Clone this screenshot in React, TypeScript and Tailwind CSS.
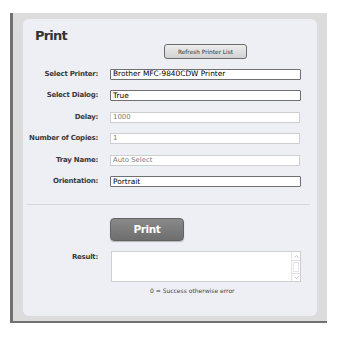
import React from "react";

const font = "font-['DejaVu_Sans',sans-serif]";

const Label = ({ text }: { text: string }) => (
  <div className="w-[75px] text-right text-[7px] leading-[7px] font-bold tracking-[-0.25px] text-[#3a3a3a] whitespace-nowrap">
    {text}
  </div>
);

const SelectBox = ({ value }: { value: string }) => (
  <div className="ml-[12px] w-[191px] h-[11px] bg-white border border-[#707070] rounded-[1px] flex items-end pl-[2px] pb-[0.5px] text-[7.4px] leading-[8px] text-black whitespace-nowrap">
    {value}
  </div>
);

const TextBox = ({ value }: { value: string }) => (
  <div className="ml-[12px] w-[190px] h-[11px] bg-white border border-[#cfcfcf] flex items-center pl-[2px] text-[6.9px] leading-[7px] text-[#7a7a7a] whitespace-nowrap">
    {value}
  </div>
);

const rows: { label: string; value: string; kind: "select" | "text" }[] = [
  { label: "Select Printer:", value: "Brother MFC-9840CDW Printer", kind: "select" },
  { label: "Select Dialog:", value: "True", kind: "select" },
  { label: "Delay:", value: "1000", kind: "text" },
  { label: "Number of Copies:", value: "1", kind: "text" },
  { label: "Tray Name:", value: "Auto Select", kind: "text" },
  { label: "Orientation:", value: "Portrait", kind: "select" },
];

export default function App() {
  return (
    <div className={`${font} w-[340px] h-[340px] bg-white pt-[13px] pl-[10px]`}>
      <div className="w-[317px] h-[310px] bg-[#dcdcdc] border-l-[3px] border-b-[2px] border-[#717171] px-[10px] pt-[6px] pb-[5px]">
        <div className="h-full bg-[#eeeff5] rounded-[6px] pt-[9.5px]">
          <div className="pl-[12px] text-[13px] leading-[13px] font-bold tracking-[-0.8px] text-[#333]">Print</div>

          <div className="ml-[141px] mt-[2.5px] w-[83px] h-[15px] rounded-[3px] border border-[#6c6c6c] bg-gradient-to-b from-[#ececec] to-[#d2d2d2] flex items-center justify-center text-[5.8px] leading-[6px] text-[#333] whitespace-nowrap">
            Refresh Printer List
          </div>

          <div className="mt-[9.5px] flex flex-col gap-[10.6px]">
            {rows.map((r) => (
              <div key={r.label} className="flex items-center">
                <Label text={r.label} />
                {r.kind === "select" ? <SelectBox value={r.value} /> : <TextBox value={r.value} />}
              </div>
            ))}
          </div>

          <div className="ml-[4px] mt-[17px] w-[283px] h-px bg-[#d6d7dc]" />

          <div className="ml-[87px] mt-[13px] w-[74px] h-[23px] rounded-[4px] border border-[#626262] bg-gradient-to-b from-[#8a8a8a] to-[#6e6e6e] shadow-[0_1px_1px_rgba(0,0,0,0.25)] flex items-center justify-center text-[10.5px] leading-[11px] font-bold tracking-[-0.4px] text-white">
            Print
          </div>

          <div className="mt-[10px] flex items-start">
            <div className="pt-[3px]">
              <Label text="Result:" />
            </div>
            <div className="ml-[13px] w-[190px] h-[31px] bg-white border border-[#cfcfcf] flex justify-end">
              <div className="w-[9px] h-full border-l border-[#e2e2e2] flex flex-col">
                <div className="h-[9px] border-b border-[#e2e2e2] flex items-center justify-center">
                  <svg width="5" height="3" viewBox="0 0 5 3">
                    <path d="M0.5 2.5 L2.5 0.5 L4.5 2.5" fill="none" stroke="#b5b5b5" strokeWidth="0.8" />
                  </svg>
                </div>
                <div className="flex-1 mx-[1px] my-[1px] border border-[#e6e6e6]" />
                <div className="h-[8px] border-t border-[#e2e2e2] flex items-center justify-center">
                  <svg width="5" height="3" viewBox="0 0 5 3">
                    <path d="M0.5 0.5 L2.5 2.5 L4.5 0.5" fill="none" stroke="#b5b5b5" strokeWidth="0.8" />
                  </svg>
                </div>
              </div>
            </div>
          </div>

          <div className="ml-[127px] mt-[6px] text-[6px] leading-[6px] text-[#444] whitespace-nowrap">
            0 = Success otherwise error
          </div>
        </div>
      </div>
    </div>
  );
}
